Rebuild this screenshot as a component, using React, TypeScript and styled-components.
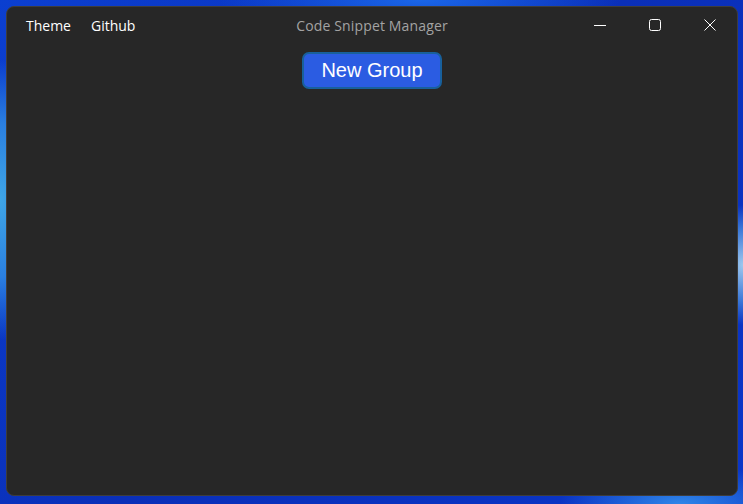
import React from "react";
import styled, { createGlobalStyle } from "styled-components";

const Global = createGlobalStyle`
  html, body { margin: 0; padding: 0; }
  body { font-family: "Open Sans", "Noto Sans", sans-serif; }
  * { box-sizing: border-box; }
`;

const Desktop = styled.div`
  width: 743px;
  height: 504px;
  padding: 6px 5px 8px 6px;
  display: flex;
  background:
    radial-gradient(ellipse 60px 140px at 0px 200px, #3fa6e6 0%, #2a7fe0 55%, transparent 100%),
    radial-gradient(ellipse 40px 60px at 743px 265px, #9ec8ee 0%, #3a78d8 60%, transparent 100%),
    radial-gradient(ellipse 200px 40px at 420px 0px, #1a66e8 0%, transparent 100%),
    radial-gradient(ellipse 120px 40px at 680px 504px, #2f86e8 0%, transparent 100%),
    linear-gradient(135deg, #0b3fd0 0%, #0a2fb8 50%, #0a36c8 100%);
`;

const Window = styled.div`
  flex: 1;
  display: flex;
  flex-direction: column;
  background: #272727;
  border: 1px solid #3d3d3d;
  border-radius: 8px;
  overflow: hidden;
`;

const TitleBar = styled.div`
  height: 38px;
  padding-bottom: 2px;
  display: grid;
  grid-template-columns: 1fr auto 1fr;
  align-items: center;
`;

const Menu = styled.div`
  display: flex;
  padding-left: 9px;
`;

const MenuItem = styled.span`
  padding: 0 10px;
  font-size: 14px;
  line-height: 19px;
  color: #ffffff;
`;

const Title = styled.div`
  font-size: 14px;
  line-height: 19px;
  letter-spacing: 0.15px;
  color: #a3a3a3;
`;

const Controls = styled.div`
  display: flex;
  justify-content: flex-end;
  height: 100%;
`;

const ControlButton = styled.div`
  width: 55px;
  height: 100%;
  display: flex;
  align-items: center;
  justify-content: center;
  color: #ffffff;
`;

const Content = styled.div`
  flex: 1;
  display: flex;
  flex-direction: column;
  align-items: center;
  padding-top: 7px;
`;

const PrimaryButton = styled.button`
  width: 140px;
  height: 37px;
  background: #2b5ce2;
  border: 2px solid #18609c;
  border-radius: 7px;
  color: #ffffff;
  font-family: "Liberation Sans", Arial, sans-serif;
  font-size: 20px;
  padding: 0;
  cursor: pointer;
`;

export default function App() {
  return (
    <>
      <Global />
      <Desktop>
        <Window>
          <TitleBar>
            <Menu>
              <MenuItem>Theme</MenuItem>
              <MenuItem>Github</MenuItem>
            </Menu>
            <Title>Code Snippet Manager</Title>
            <Controls>
              <ControlButton>
                <svg width="12" height="12" viewBox="0 0 12 12">
                  <line x1="0" y1="6.5" x2="12" y2="6.5" stroke="currentColor" strokeWidth="1" />
                </svg>
              </ControlButton>
              <ControlButton>
                <svg width="12" height="12" viewBox="0 0 12 12">
                  <rect x="0.5" y="0.5" width="11" height="11" rx="2" fill="none" stroke="currentColor" strokeWidth="1" />
                </svg>
              </ControlButton>
              <ControlButton>
                <svg width="12" height="12" viewBox="0 0 12 12">
                  <path d="M0.5 0.5 L11.5 11.5 M11.5 0.5 L0.5 11.5" stroke="currentColor" strokeWidth="1" fill="none" />
                </svg>
              </ControlButton>
            </Controls>
          </TitleBar>
          <Content>
            <PrimaryButton>New Group</PrimaryButton>
          </Content>
        </Window>
      </Desktop>
    </>
  );
}
